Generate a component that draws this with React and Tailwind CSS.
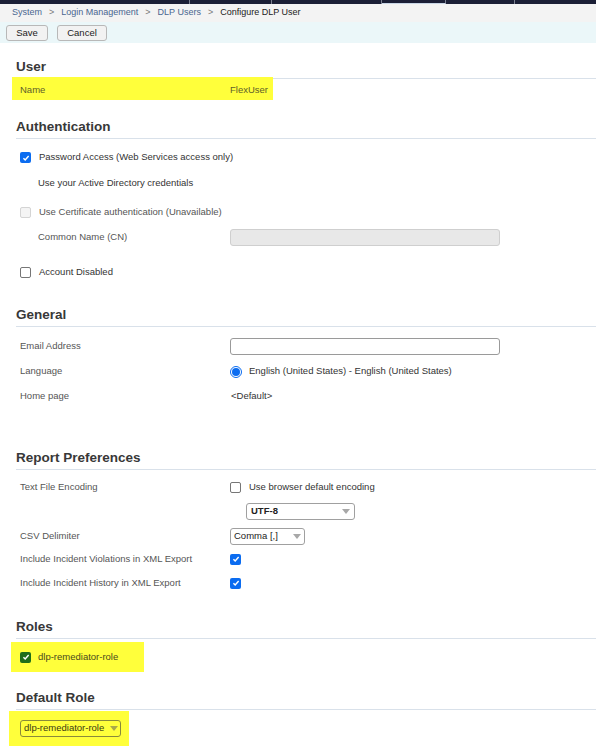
import React from "react";

const font = { fontFamily: '"Liberation Sans", Arial, sans-serif' };

const Check = ({ checked, disabled, green }) => {
  if (checked) {
    return (
      <span
        className={`inline-flex items-center justify-center w-[11px] h-[11px] rounded-[2px] shrink-0 ${
          green ? "bg-[#1f6e1a]" : "bg-[#0b6cf0]"
        }`}
      >
        <svg viewBox="0 0 10 10" className="w-[8px] h-[8px]">
          <path d="M1.8 5.2 L4 7.4 L8.3 2.6" fill="none" stroke="white" strokeWidth="1.8" />
        </svg>
      </span>
    );
  }
  return (
    <span
      className={`inline-block w-[11px] h-[11px] rounded-[2px] border shrink-0 ${
        disabled ? "border-[#d4d4d4] bg-[#f4f4f4]" : "border-[#767676] bg-white"
      }`}
    />
  );
};

const Heading = ({ children, mt }) => (
  <div className={`ml-[16px] border-b border-[#d9e1ea] h-[22px] ${mt}`}>
    <div className="text-[13.5px] font-bold leading-[20px] text-[#383838]">{children}</div>
  </div>
);

const Row = ({ label, h = "h-[25px]", children, className = "" }) => (
  <div className={`flex items-center pl-[20px] ${h} ${className}`}>
    <div className="w-[210px] shrink-0 text-[9.5px] text-[#555]">{label}</div>
    <div className="flex items-center text-[9.5px] text-[#333]">{children}</div>
  </div>
);

const Arrow = () => (
  <svg viewBox="0 0 8 5" className="w-[8px] h-[5px]">
    <path d="M0 0 L8 0 L4 5 Z" fill="#a8a8a8" />
  </svg>
);

export default function App() {
  return (
    <div className="w-[596px] h-[751px] bg-white overflow-hidden" style={font}>
      <div className="h-[4px] bg-[#1b1f36] flex">
        <div className="w-[190px] border-r border-[#7a7f90]" />
        <div className="w-[82px] border-r border-[#7a7f90]" />
        <div className="w-[110px] border-r border-[#7a7f90]" />
        <div className="w-[64px] border-r border-[#7a7f90] border-b border-b-[#c9d6e6]" />
        <div className="w-[69px] border-r border-[#7a7f90]" />
      </div>
      <div className="h-[18px] bg-[#f3f3f3] flex items-center pl-[12px] text-[9px] gap-[7px]">
        <span className="text-[#4a6690]">System</span>
        <span className="text-[#777]">&gt;</span>
        <span className="text-[#4a6690]">Login Management</span>
        <span className="text-[#777]">&gt;</span>
        <span className="text-[#4a6690]">DLP Users</span>
        <span className="text-[#777]">&gt;</span>
        <span className="text-[#222]">Configure DLP User</span>
      </div>
      <div className="h-[21px] bg-[#ebf7f9] flex items-center pl-[6px] gap-[9px]">
        <button className="w-[42px] h-[16px] border border-[#b8b8b8] rounded-[3px] bg-[#f2f2f2] text-[9.5px] text-[#222]">
          Save
        </button>
        <button className="w-[50px] h-[16px] border border-[#b8b8b8] rounded-[3px] bg-[#f2f2f2] text-[9.5px] text-[#222]">
          Cancel
        </button>
      </div>

      <Heading mt="mt-[14px]">User</Heading>
      <div className="ml-[12px] -mt-[2px] w-[261px] h-[23px] bg-[#ffff3b] flex items-center pt-[3px] pl-[8px] pr-[5px] justify-between text-[9.5px] text-[#5e5e2a]">
        <span>Name</span>
        <span>FlexUser</span>
      </div>

      <Heading mt="mt-[17px]">Authentication</Heading>
      <div className="pl-[20px] text-[9.5px] text-[#333]">
        <div className="h-[17px] mt-[10px] flex items-center gap-[8px]">
          <Check checked />
          <span>Password Access (Web Services access only)</span>
        </div>
        <div className="h-[17px] mt-[9px] flex items-center pl-[18px]">Use your Active Directory credentials</div>
        <div className="h-[17px] mt-[12px] flex items-center gap-[8px] text-[#555]">
          <Check disabled />
          <span>Use Certificate authentication (Unavailable)</span>
        </div>
        <div className="h-[17px] mt-[8px] flex items-center pl-[18px] text-[#555]">
          <span className="w-[192px]">Common Name (CN)</span>
          <span className="w-[270px] h-[17px] rounded-[3px] border border-[#cfcfcf] bg-[#e8e8e8]" />
        </div>
        <div className="h-[17px] mt-[18px] flex items-center gap-[8px]">
          <Check />
          <span>Account Disabled</span>
        </div>
      </div>

      <Heading mt="mt-[24px]">General</Heading>
      <div className="mt-[7px]">
        <Row label="Email Address">
          <span className="w-[270px] h-[17px] rounded-[3px] border border-[#9a9a9a] bg-white" />
        </Row>
        <Row label="Language">
          <span className="w-[12px] h-[12px] rounded-full border border-[#0b6cf0] flex items-center justify-center mr-[7px]">
            <span className="w-[8px] h-[8px] rounded-full bg-[#0b6cf0]" />
          </span>
          <span>English (United States) - English (United States)</span>
        </Row>
        <Row label="Home page">
          <span className="pl-[1px]">&lt;Default&gt;</span>
        </Row>
      </div>

      <Heading mt="mt-[39px]">Report Preferences</Heading>
      <div className="mt-[8px]">
        <Row label="Text File Encoding" h="h-[19px]">
          <Check />
          <span className="ml-[8px]">Use browser default encoding</span>
        </Row>
        <div className="h-[17px] mt-[6px] ml-[246px] w-[109px] rounded-[3px] border border-[#a0a0a0] flex items-center justify-between px-[4px] text-[9.5px] font-bold text-[#222]">
          <span>UTF-8</span>
          <Arrow />
        </div>
        <div className="mt-[7px]">
          <Row label="CSV Delimiter" h="h-[19px]">
            <span className="w-[75px] h-[17px] rounded-[3px] border border-[#a0a0a0] flex items-center justify-between px-[3px] text-[#222]">
              <span>Comma [,]</span>
              <Arrow />
            </span>
          </Row>
        </div>
        <Row label="Include Incident Violations in XML Export" h="h-[24px]" className="mt-[1px]">
          <Check checked />
        </Row>
        <Row label="Include Incident History in XML Export" h="h-[24px]">
          <Check checked />
        </Row>
      </div>

      <Heading mt="mt-[22px]">Roles</Heading>
      <div className="ml-[11px] mt-[3px] w-[133px] h-[30px] bg-[#ffff3b] flex items-center pl-[9px] gap-[7px] text-[9.5px] text-[#4a4a1e]">
        <Check checked green />
        <span>dlp-remediator-role</span>
      </div>

      <Heading mt="mt-[16px]">Default Role</Heading>
      <div className="ml-[9px] mt-[1px] w-[120px] h-[35px] bg-[#ffff3b] flex items-center pl-[11px]">
        <span className="w-[101px] h-[17px] rounded-[3px] border border-[#8a8a3a] flex items-center justify-between pl-[3px] pr-[2px] text-[9.5px] text-[#3a3a14]">
          <span>dlp-remediator-role</span>
          <svg viewBox="0 0 8 5" className="w-[8px] h-[5px]">
            <path d="M0 0 L8 0 L4 5 Z" fill="#a8a84a" />
          </svg>
        </span>
      </div>
    </div>
  );
}
